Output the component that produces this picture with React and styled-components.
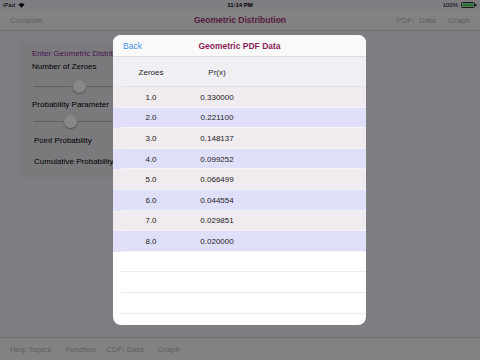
import React from 'react'
import styled, { createGlobalStyle } from 'styled-components'

const GlobalStyle = createGlobalStyle`
  html, body {
    margin: 0;
    padding: 0;
    background: #7e7e83;
  }
  body {
    font-family: "Liberation Sans", Arial, sans-serif;
  }
`

const Screen = styled.div`
  position: relative;
  width: 480px;
  height: 360px;
  overflow: hidden;
  display: flex;
  flex-direction: column;
  background: #efeff6;
`

const StatusBar = styled.div`
  height: 10px;
  display: flex;
  align-items: center;
  justify-content: space-between;
  padding: 0 3px;
  font-size: 6px;
  color: #000;
  position: relative;
`
const StatusSide = styled.div`
  display: flex;
  align-items: center;
  gap: 3px;
`
const Clock = styled.div`
  position: absolute;
  left: 0;
  right: 0;
  text-align: center;
  font-weight: bold;
`

const NavBar = styled.div`
  height: 20px;
  display: flex;
  align-items: center;
  padding: 0 10px;
  background: #f5f5f7;
  border-bottom: 1px solid #d0d0d4;
  font-size: 8px;
  position: relative;
`
const NavTitle = styled.div`
  position: absolute;
  left: 0;
  right: 0;
  text-align: center;
  color: #a8347a;
  font-weight: bold;
  font-size: 8.5px;
`
const NavButton = styled.div`
  color: #b4b4b8;
  margin-left: ${(p) => p.gap || 0}px;
`
const Spacer = styled.div`
  flex: 1;
`

const Content = styled.div`
  flex: 1;
  padding: 11px 20px;
`
const InputPanel = styled.div`
  width: 93px;
  height: 136px;
  overflow: hidden;
  background: #e6e6ec;
  padding: 7px 0 0 12px;
  box-sizing: border-box;
  display: flex;
  flex-direction: column;
  font-size: 8px;
  color: #000;
`
const PanelHeading = styled.div`
  color: #8a2a9a;
  white-space: nowrap;
  overflow: hidden;
  margin-bottom: 4px;
`
const FieldLabel = styled.div`
  white-space: nowrap;
  margin-left: ${(p) => p.indent || 0}px;
  margin-bottom: ${(p) => p.after || 0}px;
`
const SliderTrack = styled.div`
  position: relative;
  height: 1px;
  flex-shrink: 0;
  background: #b6b6bb;
  margin: ${(p) => p.before}px 0 ${(p) => p.after}px 2px;
`
const SliderThumb = styled.div`
  position: absolute;
  top: -6px;
  width: 13px;
  height: 13px;
  border-radius: 50%;
  background: #fff;
  box-shadow: 0 1px 2px rgba(0, 0, 0, 0.35);
`

const Toolbar = styled.div`
  height: 22px;
  border-top: 1px solid #d0d0d4;
  background: #f5f5f7;
  display: flex;
  align-items: center;
  padding: 0 10px;
  font-size: 8px;
`

const Dim = styled.div`
  position: absolute;
  inset: 0;
  background: rgba(0, 0, 0, 0.47);
`

const Modal = styled.div`
  position: absolute;
  left: 113px;
  top: 35px;
  width: 253px;
  height: 290px;
  background: #fff;
  border-radius: 8px;
  overflow: hidden;
  display: flex;
  flex-direction: column;
`
const ModalHeader = styled.div`
  height: 21px;
  flex-shrink: 0;
  background: #f9f9f9;
  border-bottom: 1px solid #dedee2;
  display: flex;
  align-items: center;
  padding: 0 10px;
  position: relative;
  font-size: 8.5px;
`
const BackLink = styled.div`
  color: #3a92f2;
`
const ModalTitle = styled.div`
  position: absolute;
  left: 0;
  right: 0;
  text-align: center;
  color: #8c1e5c;
  font-weight: bold;
`

const Row = styled.div`
  display: grid;
  grid-template-columns: 76px 56px;
  align-items: center;
  height: ${(p) => p.h}px;
  flex-shrink: 0;
  box-sizing: border-box;
  background: ${(p) => p.bg};
  font-size: 8px;
  color: #222;
  position: relative;
  &::after {
    content: '';
    position: absolute;
    left: 8px;
    right: 0;
    bottom: 0;
    height: 1px;
    background: ${(p) => p.line};
  }
`
const Cell = styled.div`
  text-align: center;
  white-space: nowrap;
`

const data = [
  ['1.0', '0.330000'],
  ['2.0', '0.221100'],
  ['3.0', '0.148137'],
  ['4.0', '0.099252'],
  ['5.0', '0.066499'],
  ['6.0', '0.044554'],
  ['7.0', '0.029851'],
  ['8.0', '0.020000'],
]

const Wifi = () => (
  <svg width="7" height="6" viewBox="0 0 14 11">
    <path d="M7 11 L1 4.5 A9 9 0 0 1 13 4.5 Z" fill="#000" />
  </svg>
)

const Battery = () => (
  <svg width="16" height="6" viewBox="0 0 16 6">
    <rect x="0.5" y="0.5" width="13" height="5" rx="1" fill="none" stroke="#000" strokeWidth="0.8" />
    <rect x="1.5" y="1.5" width="11" height="3" fill="#4cd964" />
    <rect x="14.2" y="2" width="1.2" height="2" fill="#000" />
  </svg>
)

const App = () => {
  return (
    <>
      <GlobalStyle />
      <Screen>
        <StatusBar>
          <StatusSide>
            <span>iPad</span>
            <Wifi />
          </StatusSide>
          <Clock>11:14 PM</Clock>
          <StatusSide>
            <span>100%</span>
            <Battery />
          </StatusSide>
        </StatusBar>
        <NavBar>
          <NavButton>Compute</NavButton>
          <NavTitle>Geometric Distribution</NavTitle>
          <Spacer />
          <NavButton>PDF:&nbsp; Data</NavButton>
          <NavButton gap={12}>Graph</NavButton>
        </NavBar>
        <Content>
          <InputPanel>
            <PanelHeading>Enter Geometric Distribution Parameters</PanelHeading>
            <FieldLabel>Number of Zeroes</FieldLabel>
            <SliderTrack before={15} after={13}>
              <SliderThumb style={{ left: '39px' }} />
            </SliderTrack>
            <FieldLabel>Probability Parameter</FieldLabel>
            <SliderTrack before={12} after={14}>
              <SliderThumb style={{ left: '30px' }} />
            </SliderTrack>
            <FieldLabel indent={2} after={12}>Point Probability</FieldLabel>
            <FieldLabel indent={2}>Cumulative Probability</FieldLabel>
          </InputPanel>
        </Content>
        <Toolbar>
          <NavButton>Help Topics</NavButton>
          <NavButton gap={14}>Function</NavButton>
          <NavButton gap={10}>CDF: Data</NavButton>
          <NavButton gap={14}>Graph</NavButton>
        </Toolbar>
        <Dim />
        <Modal>
          <ModalHeader>
            <BackLink>Back</BackLink>
            <ModalTitle>Geometric PDF Data</ModalTitle>
          </ModalHeader>
          <Row h={30} bg="#f0f0f4" line="#e4e4e8">
            <Cell>Zeroes</Cell>
            <Cell>Pr(x)</Cell>
          </Row>
          {data.map(([x, p], i) => (
            <Row key={x} h={20.6} bg={i % 2 === 0 ? '#efebee' : '#e0dff9'} line="#f4f3f6">
              <Cell>{x}</Cell>
              <Cell>{p}</Cell>
            </Row>
          ))}
          {[0, 1, 2].map((k) => (
            <Row key={k} h={20.6} bg="#fff" line="#ececee" />
          ))}
        </Modal>
      </Screen>
    </>
  )
}

export default App
